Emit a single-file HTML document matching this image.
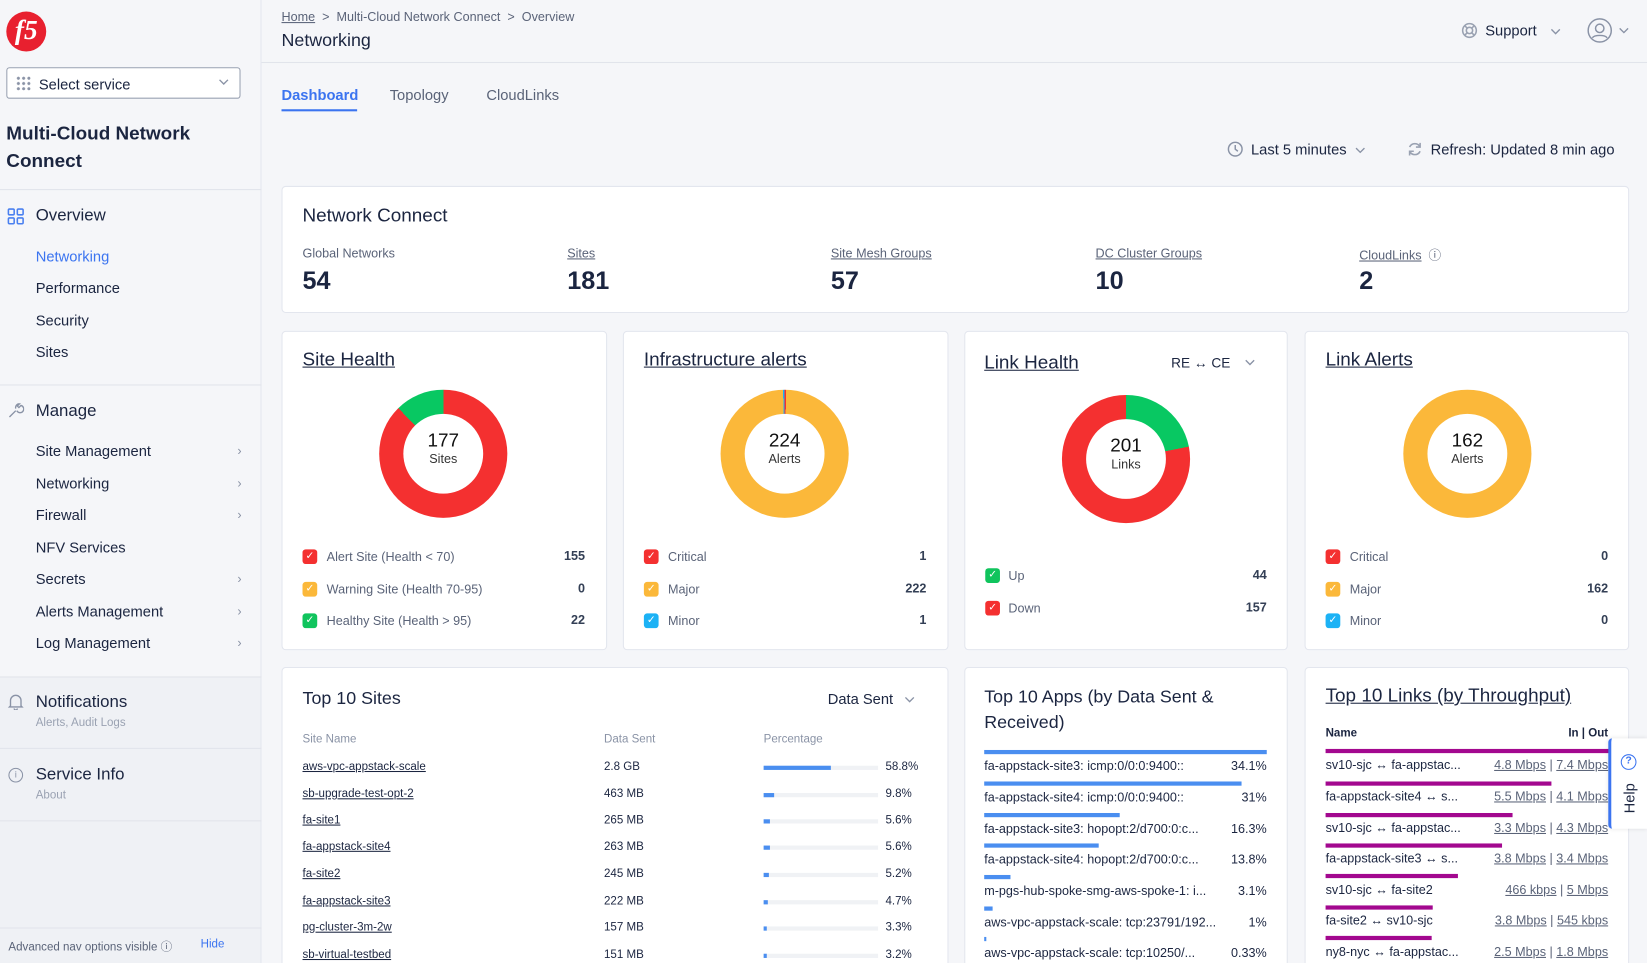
<!DOCTYPE html>
<html><head><meta charset="utf-8"><style>
*{box-sizing:border-box;margin:0;padding:0}
html,body{width:1647px;height:963px;overflow:hidden;background:#f5f6f9}
#w{position:absolute;left:0;top:0;width:1568px;height:917px;overflow:hidden;transform:scale(1.05038);transform-origin:0 0;font-family:"Liberation Sans",sans-serif;color:#1b2540}
.a{position:absolute;white-space:nowrap}
.sb{left:0;top:0;width:249px;height:917px;background:#f5f6f9;border-right:1px solid #e3e6ee}
.hr{position:absolute;left:0;width:249px;height:1px;background:#e1e4eb}
.ni{position:absolute;left:34px;font-size:14px;color:#1b2540}
.chev{position:absolute;left:226px;font-size:12px;color:#8a93a6}
.card{position:absolute;background:#fff;border:1px solid #e3e6ee;border-radius:4px}
.ct{position:absolute;font-size:18px;color:#1b2540;text-decoration:underline;white-space:nowrap}
.donut{position:absolute;width:122px;height:122px;border-radius:50%}
.donut::after{content:"";position:absolute;left:23px;top:23px;width:76px;height:76px;border-radius:50%;background:#fff}
.dl{position:absolute;width:122px;text-align:center;z-index:2}
.dl b{display:block;font-weight:normal;font-size:18px;color:#111;margin-top:38px}
.dl i{display:block;font-style:normal;font-size:12px;color:#333}
.lg{position:absolute;font-size:12px;color:#5a6378;white-space:nowrap}
.cb{position:absolute;width:14px;height:14px;border-radius:3px;color:#fff;font-size:10px;text-align:center;line-height:14px}
.lv{position:absolute;font-size:12px;color:#333f55;font-weight:bold;text-align:right;width:40px}
.r{background:#f43030}.o{background:#fbb83a}.g{background:#10c45d}.b{background:#1cb2f5}
.tr{position:absolute;font-size:11px;color:#1b2540;white-space:nowrap}
.rt{text-align:right;width:200px}
.u{text-decoration:underline}
.bar{position:absolute;height:4px;background:#f0f2f5}
.bar i{position:absolute;left:0;top:0;height:4px;background:#4a8ef0}
</style></head><body><div id="w">
<div class="a sb"></div>
<div class="a" style="left:6px;top:11px;width:38px;height:38px;border-radius:50%;background:#e8202f;color:#fff;font:bold italic 26px 'Liberation Serif',serif;text-align:center;line-height:36px">f5</div>
<div class="a" style="left:6px;top:64px;width:223px;height:30px;border:1px solid #9aa2b2;border-radius:3px;background:#fff"></div>
<div class="a" style="left:15px;top:72px;width:14px;height:14px;background:radial-gradient(circle,#8a93a6 1.3px,transparent 1.6px) 0 0/5px 5px"></div>
<div class="a" style="left:37px;top:72px;font-size:14px">Select service</div>
<svg class="a" style="left:208px;top:75px" width="10" height="6"><path d="M1 1l4 4 4-4" fill="none" stroke="#8a93a6" stroke-width="1.3"/></svg>
<div class="a" style="left:6px;top:114px;font-size:18px;font-weight:bold;line-height:26px">Multi-Cloud Network<br>Connect</div>
<div class="hr" style="top:180px"></div>
<svg class="a" style="left:7px;top:198px" width="16" height="16" fill="none" stroke="#4a80f0" stroke-width="1.5"><rect x="1" y="1" width="5.5" height="5.5" rx="1"/><rect x="9.5" y="1" width="5.5" height="5.5" rx="1"/><rect x="1" y="9.5" width="5.5" height="5.5" rx="1"/><rect x="9.5" y="9.5" width="5.5" height="5.5" rx="1"/></svg>
<div class="a" style="left:34px;top:197px;font-size:16px">Overview</div>
<div class="ni" style="top:236px;color:#3b74f0">Networking</div>
<div class="ni" style="top:266px">Performance</div>
<div class="ni" style="top:297px">Security</div>
<div class="ni" style="top:327px">Sites</div>
<div class="hr" style="top:366px"></div>
<svg class="a" style="left:7px;top:383px" width="16" height="16" fill="none" stroke="#8a93a6" stroke-width="1.3"><path d="M2 14l6-6M9 8a3.5 3.5 0 1 0 4-5l-2 2-1.5-1.5 2-2A3.5 3.5 0 0 0 8 6"/></svg>
<div class="a" style="left:34px;top:383px;font-size:16px">Manage</div>
<div class="ni" style="top:421px">Site Management</div><div class="chev" style="top:422px">&#8250;</div>
<div class="ni" style="top:452px">Networking</div><div class="chev" style="top:453px">&#8250;</div>
<div class="ni" style="top:482px">Firewall</div><div class="chev" style="top:483px">&#8250;</div>
<div class="ni" style="top:513px">NFV Services</div>
<div class="ni" style="top:543px">Secrets</div><div class="chev" style="top:544px">&#8250;</div>
<div class="ni" style="top:574px">Alerts Management</div><div class="chev" style="top:575px">&#8250;</div>
<div class="ni" style="top:604px">Log Management</div><div class="chev" style="top:605px">&#8250;</div>
<div class="a" style="left:0;top:644px;width:248px;height:273px;background:#eff1f5"></div>
<div class="hr" style="top:644px"></div>
<svg class="a" style="left:7px;top:660px" width="16" height="16" fill="none" stroke="#8a93a6" stroke-width="1.3"><path d="M3 12V7a5 5 0 0 1 10 0v5l1 1H2zM6.5 14.5a1.5 1.5 0 0 0 3 0"/></svg>
<div class="a" style="left:34px;top:660px;font-size:16px">Notifications</div>
<div class="a" style="left:34px;top:682px;font-size:11px;color:#9aa2b2">Alerts, Audit Logs</div>
<div class="hr" style="top:712px"></div>
<div class="a" style="left:8px;top:731px;width:14px;height:14px;border:1.5px solid #8a93a6;border-radius:50%;font-size:9px;text-align:center;line-height:11px;color:#8a93a6">i</div>
<div class="a" style="left:34px;top:729px;font-size:16px">Service Info</div>
<div class="a" style="left:34px;top:751px;font-size:11px;color:#9aa2b2">About</div>
<div class="hr" style="top:781px"></div>
<div class="hr" style="top:883px"></div>
<div class="a" style="left:8px;top:893px;font-size:11px;color:#5a6378">Advanced nav options visible &#9432;</div>
<div class="a" style="left:191px;top:893px;font-size:11px;color:#3b74f0">Hide</div>

<div class="a" style="left:268px;top:9px;font-size:12px;color:#5a6378"><span class="u">Home</span> &nbsp;&gt;&nbsp; Multi-Cloud Network Connect &nbsp;&gt;&nbsp; Overview</div>
<div class="a" style="left:268px;top:29px;font-size:17px">Networking</div>
<svg class="a" style="left:1391px;top:21px" width="16" height="16" fill="none" stroke="#9aa2b2" stroke-width="1.5"><circle cx="8" cy="8" r="6.5"/><circle cx="8" cy="8" r="3"/><path d="M3.5 3.5l2.4 2.4M12.5 3.5l-2.4 2.4M3.5 12.5l2.4-2.4M12.5 12.5l-2.4-2.4"/></svg>
<div class="a" style="left:1414px;top:21px;font-size:14px">Support</div>
<svg class="a" style="left:1476px;top:27px" width="10" height="6"><path d="M1 1l4 4 4-4" fill="none" stroke="#8a93a6" stroke-width="1.3"/></svg>
<svg class="a" style="left:1511px;top:17px" width="24" height="24" fill="none" stroke="#8a93a6" stroke-width="1.4"><circle cx="12" cy="12" r="11"/><circle cx="12" cy="10" r="4"/><path d="M5 19c2-3 12-3 14 0"/></svg>
<svg class="a" style="left:1541px;top:26px" width="10" height="6"><path d="M1 1l4 4 4-4" fill="none" stroke="#8a93a6" stroke-width="1.3"/></svg>
<div class="a" style="left:249px;top:59px;width:1319px;height:1px;background:#e1e4eb"></div>
<div class="a" style="left:268px;top:82px;font-size:14px;font-weight:bold;color:#3b74f0">Dashboard</div>
<div class="a" style="left:268px;top:104px;width:72px;height:2px;background:#3b74f0"></div>
<div class="a" style="left:371px;top:82px;font-size:14px;color:#5a6378">Topology</div>
<div class="a" style="left:463px;top:82px;font-size:14px;color:#5a6378">CloudLinks</div>
<svg class="a" style="left:1168px;top:134px" width="16" height="16" fill="none" stroke="#8a93a6" stroke-width="1.4"><circle cx="8" cy="8" r="6.5"/><path d="M8 4v4l2.5 2"/></svg>
<div class="a" style="left:1191px;top:134px;font-size:14px">Last 5 minutes</div>
<svg class="a" style="left:1290px;top:140px" width="10" height="6"><path d="M1 1l4 4 4-4" fill="none" stroke="#8a93a6" stroke-width="1.3"/></svg>
<svg class="a" style="left:1339px;top:134px" width="16" height="16" fill="none" stroke="#9aa2b2" stroke-width="1.5"><path d="M13 6A5.5 5.5 0 0 0 3 6M3 10a5.5 5.5 0 0 0 10 0M13 2v4h-4M3 14v-4h4"/></svg>
<div class="a" style="left:1362px;top:134px;font-size:14px">Refresh: Updated 8 min ago</div>

<div class="card" style="left:268px;top:177px;width:1283px;height:121px"></div>
<div class="a" style="left:288px;top:195px;font-size:18px">Network Connect</div>
<div class="a" style="left:288px;top:234px;font-size:12px;color:#5a6378">Global Networks</div>
<div class="a" style="left:288px;top:254px;font-size:24px;font-weight:bold">54</div>
<div class="a u" style="left:540px;top:234px;font-size:12px;color:#5a6378">Sites</div>
<div class="a" style="left:540px;top:254px;font-size:24px;font-weight:bold">181</div>
<div class="a u" style="left:791px;top:234px;font-size:12px;color:#5a6378">Site Mesh Groups</div>
<div class="a" style="left:791px;top:254px;font-size:24px;font-weight:bold">57</div>
<div class="a u" style="left:1043px;top:234px;font-size:12px;color:#5a6378">DC Cluster Groups</div>
<div class="a" style="left:1043px;top:254px;font-size:24px;font-weight:bold">10</div>
<div class="a" style="left:1294px;top:234px;font-size:12px;color:#5a6378"><span class="u">CloudLinks</span> &nbsp;&#9432;</div>
<div class="a" style="left:1294px;top:254px;font-size:24px;font-weight:bold">2</div>

<div class="card" style="left:268px;top:315px;width:310px;height:304px"></div>
<div class="ct" style="left:288px;top:332px">Site Health</div>
<div class="donut" style="left:361px;top:371px;background:conic-gradient(#f43030 0 87.6%,#08c862 87.6% 100%)"></div>
<div class="dl" style="left:361px;top:371px"><b>177</b><i>Sites</i></div>
<div class="cb r" style="left:288px;top:523px">&#10003;</div><div class="lg" style="left:311px;top:523px">Alert Site (Health &lt; 70)</div><div class="lv" style="left:517px;top:522px">155</div>
<div class="cb o" style="left:288px;top:554px">&#10003;</div><div class="lg" style="left:311px;top:554px">Warning Site (Health 70-95)</div><div class="lv" style="left:517px;top:553px">0</div>
<div class="cb g" style="left:288px;top:584px">&#10003;</div><div class="lg" style="left:311px;top:584px">Healthy Site (Health &gt; 95)</div><div class="lv" style="left:517px;top:583px">22</div>

<div class="card" style="left:593px;top:315px;width:310px;height:304px"></div>
<div class="ct" style="left:613px;top:332px">Infrastructure alerts</div>
<div class="donut" style="left:686px;top:371px;background:conic-gradient(#f43030 0 0.4%,#fbb83a 0.4% 99.6%,#1cb2f5 99.6% 100%)"></div>
<div class="dl" style="left:686px;top:371px"><b>224</b><i>Alerts</i></div>
<div class="cb r" style="left:613px;top:523px">&#10003;</div><div class="lg" style="left:636px;top:523px">Critical</div><div class="lv" style="left:842px;top:522px">1</div>
<div class="cb o" style="left:613px;top:554px">&#10003;</div><div class="lg" style="left:636px;top:554px">Major</div><div class="lv" style="left:842px;top:553px">222</div>
<div class="cb b" style="left:613px;top:584px">&#10003;</div><div class="lg" style="left:636px;top:584px">Minor</div><div class="lv" style="left:842px;top:583px">1</div>

<div class="card" style="left:918px;top:315px;width:308px;height:304px"></div>
<div class="ct" style="left:937px;top:335px">Link Health</div>
<div class="a" style="left:1115px;top:338px;font-size:13px">RE &#8596; CE</div>
<svg class="a" style="left:1185px;top:342px" width="10" height="6"><path d="M1 1l4 4 4-4" fill="none" stroke="#8a93a6" stroke-width="1.3"/></svg>
<div class="donut" style="left:1011px;top:376px;background:conic-gradient(#08c862 0 21.9%,#f43030 21.9% 100%)"></div>
<div class="dl" style="left:1011px;top:376px"><b>201</b><i>Links</i></div>
<div class="cb g" style="left:938px;top:541px">&#10003;</div><div class="lg" style="left:960px;top:541px">Up</div><div class="lv" style="left:1166px;top:540px">44</div>
<div class="cb r" style="left:938px;top:572px">&#10003;</div><div class="lg" style="left:960px;top:572px">Down</div><div class="lv" style="left:1166px;top:571px">157</div>

<div class="card" style="left:1242px;top:315px;width:309px;height:304px"></div>
<div class="ct" style="left:1262px;top:332px">Link Alerts</div>
<div class="donut" style="left:1336px;top:371px;background:#fbb83a"></div>
<div class="dl" style="left:1336px;top:371px"><b>162</b><i>Alerts</i></div>
<div class="cb r" style="left:1262px;top:523px">&#10003;</div><div class="lg" style="left:1285px;top:523px">Critical</div><div class="lv" style="left:1491px;top:522px">0</div>
<div class="cb o" style="left:1262px;top:554px">&#10003;</div><div class="lg" style="left:1285px;top:554px">Major</div><div class="lv" style="left:1491px;top:553px">162</div>
<div class="cb b" style="left:1262px;top:584px">&#10003;</div><div class="lg" style="left:1285px;top:584px">Minor</div><div class="lv" style="left:1491px;top:583px">0</div>

<div class="card" style="left:268px;top:635px;width:635px;height:320px"></div>
<div class="a" style="left:288px;top:655px;font-size:17px">Top 10 Sites</div>
<div class="a" style="left:788px;top:657px;font-size:14px">Data Sent</div>
<svg class="a" style="left:861px;top:663px" width="10" height="6"><path d="M1 1l4 4 4-4" fill="none" stroke="#8a93a6" stroke-width="1.3"/></svg>
<div class="tr" style="left:288px;top:698px;color:#8a93a6">Site Name</div>
<div class="tr" style="left:575px;top:698px;color:#8a93a6">Data Sent</div>
<div class="tr" style="left:727px;top:698px;color:#8a93a6">Percentage</div>

<div class="tr u" style="left:288px;top:724px">aws-vpc-appstack-scale</div><div class="tr" style="left:575px;top:724px">2.8 GB</div><div class="bar" style="left:727px;top:729px;width:109px"><i style="width:64px"></i></div><div class="tr" style="left:843px;top:724px">58.8%</div>
<div class="tr u" style="left:288px;top:750px">sb-upgrade-test-opt-2</div><div class="tr" style="left:575px;top:750px">463 MB</div><div class="bar" style="left:727px;top:755px;width:109px"><i style="width:10px"></i></div><div class="tr" style="left:843px;top:750px">9.8%</div>
<div class="tr u" style="left:288px;top:775px">fa-site1</div><div class="tr" style="left:575px;top:775px">265 MB</div><div class="bar" style="left:727px;top:780px;width:109px"><i style="width:6px"></i></div><div class="tr" style="left:843px;top:775px">5.6%</div>
<div class="tr u" style="left:288px;top:800px">fa-appstack-site4</div><div class="tr" style="left:575px;top:800px">263 MB</div><div class="bar" style="left:727px;top:805px;width:109px"><i style="width:6px"></i></div><div class="tr" style="left:843px;top:800px">5.6%</div>
<div class="tr u" style="left:288px;top:826px">fa-site2</div><div class="tr" style="left:575px;top:826px">245 MB</div><div class="bar" style="left:727px;top:831px;width:109px"><i style="width:5px"></i></div><div class="tr" style="left:843px;top:826px">5.2%</div>
<div class="tr u" style="left:288px;top:852px">fa-appstack-site3</div><div class="tr" style="left:575px;top:852px">222 MB</div><div class="bar" style="left:727px;top:857px;width:109px"><i style="width:4px"></i></div><div class="tr" style="left:843px;top:852px">4.7%</div>
<div class="tr u" style="left:288px;top:877px">pg-cluster-3m-2w</div><div class="tr" style="left:575px;top:877px">157 MB</div><div class="bar" style="left:727px;top:882px;width:109px"><i style="width:3px"></i></div><div class="tr" style="left:843px;top:877px">3.3%</div>
<div class="tr u" style="left:288px;top:903px">sb-virtual-testbed</div><div class="tr" style="left:575px;top:903px">151 MB</div><div class="bar" style="left:727px;top:908px;width:109px"><i style="width:3px"></i></div><div class="tr" style="left:843px;top:903px">3.2%</div>

<div class="card" style="left:918px;top:635px;width:308px;height:320px"></div>
<div class="a" style="left:937px;top:652px;font-size:17px;line-height:24px">Top 10 Apps (by Data Sent &amp;<br>Received)</div>
<div class="a" style="left:937px;top:714px;width:269px;height:4px;background:#4a8ef0"></div><div class="tr" style="left:937px;top:722px;font-size:12px">fa-appstack-site3: icmp:0/0:0:9400::</div><div class="tr rt" style="left:1006px;top:722px;font-size:12px">34.1%</div>
<div class="a" style="left:937px;top:744px;width:245px;height:4px;background:#4a8ef0"></div><div class="tr" style="left:937px;top:752px;font-size:12px">fa-appstack-site4: icmp:0/0:0:9400::</div><div class="tr rt" style="left:1006px;top:752px;font-size:12px">31%</div>
<div class="a" style="left:937px;top:774px;width:129px;height:4px;background:#4a8ef0"></div><div class="tr" style="left:937px;top:782px;font-size:12px">fa-appstack-site3: hopopt:2/d700:0:c...</div><div class="tr rt" style="left:1006px;top:782px;font-size:12px">16.3%</div>
<div class="a" style="left:937px;top:803px;width:109px;height:4px;background:#4a8ef0"></div><div class="tr" style="left:937px;top:811px;font-size:12px">fa-appstack-site4: hopopt:2/d700:0:c...</div><div class="tr rt" style="left:1006px;top:811px;font-size:12px">13.8%</div>
<div class="a" style="left:937px;top:833px;width:25px;height:4px;background:#4a8ef0"></div><div class="tr" style="left:937px;top:841px;font-size:12px">m-pgs-hub-spoke-smg-aws-spoke-1: i...</div><div class="tr rt" style="left:1006px;top:841px;font-size:12px">3.1%</div>
<div class="a" style="left:937px;top:863px;width:8px;height:4px;background:#4a8ef0"></div><div class="tr" style="left:937px;top:871px;font-size:12px">aws-vpc-appstack-scale: tcp:23791/192...</div><div class="tr rt" style="left:1006px;top:871px;font-size:12px">1%</div>
<div class="a" style="left:937px;top:892px;width:2px;height:4px;background:#4a8ef0"></div><div class="tr" style="left:937px;top:900px;font-size:12px">aws-vpc-appstack-scale: tcp:10250/...</div><div class="tr rt" style="left:1006px;top:900px;font-size:12px">0.33%</div>

<div class="card" style="left:1242px;top:635px;width:309px;height:320px"></div>
<div class="ct" style="left:1262px;top:652px">Top 10 Links (by Throughput)</div>
<div class="tr" style="left:1262px;top:692px;font-weight:bold">Name</div>
<div class="tr rt" style="left:1331px;top:692px;font-weight:bold">In | Out</div>
<div class="a" style="left:1262px;top:713px;width:283px;height:4px;background:#a3088f"></div><div class="tr" style="left:1262px;top:721px;font-size:12px">sv10-sjc &#8596; fa-appstac...</div><div class="tr rt" style="left:1331px;top:721px;font-size:12px;color:#5a6378"><span class="u">4.8 Mbps</span> | <span class="u">7.4 Mbps</span></div>
<div class="a" style="left:1262px;top:744px;width:215px;height:4px;background:#a3088f"></div><div class="tr" style="left:1262px;top:751px;font-size:12px">fa-appstack-site4 &#8596; s...</div><div class="tr rt" style="left:1331px;top:751px;font-size:12px;color:#5a6378"><span class="u">5.5 Mbps</span> | <span class="u">4.1 Mbps</span></div>
<div class="a" style="left:1262px;top:774px;width:178px;height:4px;background:#a3088f"></div><div class="tr" style="left:1262px;top:781px;font-size:12px">sv10-sjc &#8596; fa-appstac...</div><div class="tr rt" style="left:1331px;top:781px;font-size:12px;color:#5a6378"><span class="u">3.3 Mbps</span> | <span class="u">4.3 Mbps</span></div>
<div class="a" style="left:1262px;top:803px;width:168px;height:4px;background:#a3088f"></div><div class="tr" style="left:1262px;top:810px;font-size:12px">fa-appstack-site3 &#8596; s...</div><div class="tr rt" style="left:1331px;top:810px;font-size:12px;color:#5a6378"><span class="u">3.8 Mbps</span> | <span class="u">3.4 Mbps</span></div>
<div class="a" style="left:1262px;top:832px;width:126px;height:4px;background:#a3088f"></div><div class="tr" style="left:1262px;top:840px;font-size:12px">sv10-sjc &#8596; fa-site2</div><div class="tr rt" style="left:1331px;top:840px;font-size:12px;color:#5a6378"><span class="u">466 kbps</span> | <span class="u">5 Mbps</span></div>
<div class="a" style="left:1262px;top:862px;width:102px;height:4px;background:#a3088f"></div><div class="tr" style="left:1262px;top:869px;font-size:12px">fa-site2 &#8596; sv10-sjc</div><div class="tr rt" style="left:1331px;top:869px;font-size:12px;color:#5a6378"><span class="u">3.8 Mbps</span> | <span class="u">545 kbps</span></div>
<div class="a" style="left:1262px;top:891px;width:101px;height:4px;background:#a3088f"></div><div class="tr" style="left:1262px;top:899px;font-size:12px">ny8-nyc &#8596; fa-appstac...</div><div class="tr rt" style="left:1331px;top:899px;font-size:12px;color:#5a6378"><span class="u">2.5 Mbps</span> | <span class="u">1.8 Mbps</span></div>

<div class="a" style="left:1531px;top:703px;width:37px;height:86px;background:#fff;border-left:3px solid #3b74f0;border-radius:4px 0 0 4px;box-shadow:0 0 4px rgba(0,0,0,.1)"></div>
<div class="a" style="left:1543px;top:718px;width:15px;height:15px;border:1.5px solid #3b74f0;border-radius:50%;color:#3b74f0;font-size:10px;font-weight:bold;text-align:center;line-height:12px">?</div>
<div class="a" style="left:1536px;top:752px;font-size:14px;transform:rotate(-90deg);transform-origin:center;width:30px;text-align:center">Help</div>
</div></body></html>
